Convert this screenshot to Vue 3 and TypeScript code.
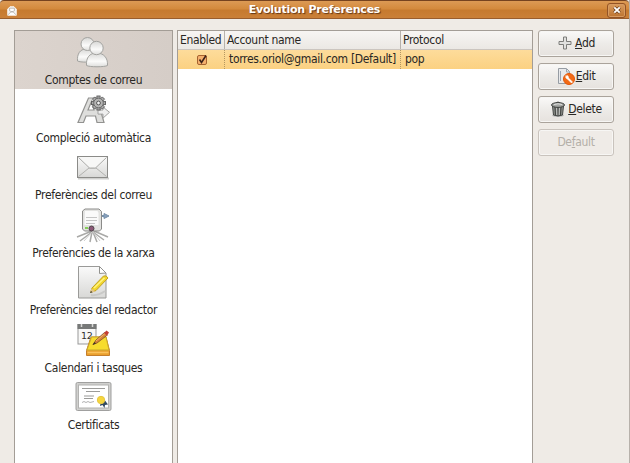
<script setup lang="ts">
import { ref } from 'vue'

interface Category {
  icon: string
  label: string
}

const categories: Category[] = [
  { icon: 'accounts', label: 'Comptes de correu' },
  { icon: 'completion', label: 'Compleció automàtica' },
  { icon: 'mail', label: 'Preferències del correu' },
  { icon: 'network', label: 'Preferències de la xarxa' },
  { icon: 'composer', label: 'Preferències del redactor' },
  { icon: 'calendar', label: 'Calendari i tasques' },
  { icon: 'certificate', label: 'Certificats' },
]
const selected = ref(0)
const spokes = [0, 45, 90, 135, 180, 225, 270, 315]
</script>

<template>
  <div class="window">
    <header class="titlebar">
      <svg class="app-icon" viewBox="0 0 10 10">
        <path d="M.7 9.3V3.2L3 .7h4l2.3 2.500v6.100z" fill="#f4f3f1" stroke="#fff" stroke-width=".8" />
        <path d="M2.600 2.200h4.800v2.600L5 6 2.600 4.800zM1 8.800l3-3h2l3 3" fill="#fff" stroke="#a7a29c" stroke-width=".7" />
      </svg>
      <h1>Evolution Preferences</h1>
      <button class="close" aria-label="Close">
        <svg viewBox="0 0 8 8"><path d="M1.300 1.300l5.400 5.400M6.700 1.300L1.300 6.700" stroke="#613616" stroke-width="3.200" /><path d="M1.300 1.300l5.400 5.400M6.700 1.300L1.300 6.700" stroke="#fff" stroke-width="1.900" /></svg>
      </button>
    </header>
    <main class="content">
      <nav class="sidebar">
        <div v-for="(c, i) in categories" :key="c.icon" class="item" :class="{ selected: i === selected }" @click="selected = i">
          <svg class="cat-icon" viewBox="0 0 34 34">
            <defs>
              <linearGradient id="silver" x1="0" y1="0" x2="0" y2="1"><stop offset="0" stop-color="#fafafa" /><stop offset="1" stop-color="#d8d8d6" /></linearGradient>
              <linearGradient id="body" x1="0" y1="0" x2="0" y2="1"><stop offset="0" stop-color="#d8d8d6" /><stop offset=".6" stop-color="#fbfbfa" /><stop offset="1" stop-color="#dededc" /></linearGradient>
            </defs>
            <g v-if="c.icon === 'accounts'" fill="url(#body)" stroke="#a3a3a0">
              <path d="M1.500 26c-.5-7 2.500-12 8.500-12s8 4 8 12c-3 1.500-13.500 1.500-16.500 0z" />
              <circle cx="11.500" cy="9" r="6.500" />
              <path d="M10.500 30.500c-.5-8 3-12.500 10-12.500s11.500 4.500 11 12.500c-3 1.700-18 1.700-21 0z" />
              <circle cx="20.500" cy="13" r="6.700" />
            </g>
            <g v-else-if="c.icon === 'completion'" transform="translate(0 -2)">
              <path d="M2 31.500h5.500l2.500-6.500h9.500l1.500 6.500H28L21 7h-8.500zM12 19l3.500-8.500 2.500 8.500z" fill="#dededc" stroke="#929290" stroke-width="1.200" fill-rule="evenodd" />
              <path d="M22 19h5v-3l6.500 5.300-6.500 5.800v-4h-5z" fill="#eee" stroke="#a1a1a0" />
              <g transform="translate(22.500 12)">
                <g v-for="s in spokes" :key="s" :transform="`rotate(${s})`"><rect x="-1.600" y="-7" width="3.200" height="5" fill="#aaa" stroke="#5d5d5d" stroke-width=".9" /></g>
                <circle r="4.800" fill="#b5b5b4" stroke="#6c6c6c" /><circle r="1.900" fill="#f2f2f2" stroke="#555" />
              </g>
            </g>
            <g v-else-if="c.icon === 'mail'">
              <path d="M2 28.500h31" stroke="#cfcfcd" stroke-width="2" />
              <rect x="1.500" y="6.500" width="30" height="21" fill="url(#silver)" stroke="#8b8b88" />
              <path d="M2.500 26.500L13 18h7l10.500 8.500" fill="none" stroke="#b2b2af" />
              <path d="M2.500 7.500L13 17.500q.5.500 1.500.5h4q1 0 1.500-.5L30.500 7.500" fill="#f7f7f6" stroke="#a2a29f" stroke-width=".9" />
            </g>
            <g v-else-if="c.icon === 'network'">
              <path d="M16 23L1 29M16 24L4 33M16 24l-2 10M17 24l4 10M17 24l11 8M18 23l14 6" stroke="#a9a9a7" stroke-width="1.500" />
              <path d="M16 24L8 33M17 24l7 9" stroke="#cececd" />
              <path d="M25 7.500h3v-2l5 2.500-5 2.500V8.500h-3" fill="#88a1bd" stroke="#7790aa" />
              <path d="M9 1h14l2.500 2.500V21l-2 2H8.500l-2-2V3z" fill="#e2e2e0" stroke="#8b8b89" />
              <path d="M9 3h12.500l1 2v12H8.500z" fill="#fafafa" />
              <path d="M10 9.500h11M10 12.500h11M10 15.500h9" stroke="#c5c5c5" />
              <path d="M9 20h3" stroke="#65c82d" stroke-width="1.500" />
              <circle cx="15.500" cy="20.500" r="2.500" fill="#8c5877" stroke="#4f444b" />
            </g>
            <g v-else-if="c.icon === 'composer'">
              <path d="M2.500 1.500h21l6.500 6.500v25H2.500z" fill="url(#silver)" stroke="#9a9a98" />
              <path d="M23.500 1.500L30 8l-6.500.5z" fill="#fff" stroke="#92928f" />
              <path d="M15 30q7 1 14-4" stroke="#c9c9c7" stroke-width="2" fill="none" />
              <path d="M14.500 27.500l1.500-4.500L27.500 11q3-1 4.500 2L20 25.500z" fill="#f2d62e" stroke="#c0a225" />
              <path d="M18 23l10.500-10" stroke="#fff482" stroke-width="1.400" /><path d="M14 28l1.500-4.500 4 3z" fill="#e1c487" /><path d="M14 28l1-2 1.500 1.200z" fill="#333" />
            </g>
            <g v-else-if="c.icon === 'calendar'">
              <rect x="2" y="1.500" width="18" height="19.500" fill="#f8f8f7" stroke="#999" /><path d="M1.500 1h19v5h-19z" fill="#777978" /><path d="M5.500 1v3M16.500 1v3" stroke="#d9d9d7" stroke-width="1.500" />
              <text x="5" y="16" class="day">12</text>
              <path d="M15 14h15l3.500 13.500v5H10.500v-5z" fill="#eaa02e" stroke="#c47e2c" />
              <path d="M15.500 14H30l3 13H11z" fill="#f7dc2d" stroke="#c9a92c" /><path d="M11.500 29.500h21" stroke="#fac25d" stroke-width="1.500" />
              <path d="M17 21.500l3-4.500L28.500 9.500l3 2.500L21 20z" fill="#d68338" stroke="#82502c" stroke-width=".8" /><path d="M20 18l9-7.500" stroke="#f4b369" /><path d="M28 10l2.500-2.500 2.500 2-2 3z" fill="#c33e36" /><path d="M16.500 22l2-3 1.500 1.500z" fill="#403623" />
            </g>
            <g v-else>
              <rect x="0" y="2.500" width="35" height="28" rx="1.500" fill="#d0d0ce" stroke="#a0a09f" />
              <rect x="2.500" y="5" width="30" height="23" fill="#fff" stroke="#b2b2b0" />
              <path d="M6 8.500h23M10 11.500h14M8 16h10M8 18.500h9" stroke="#9b9b99" stroke-width="1.100" /><path d="M6 22.500l2-1 2 1 2-1 2 1 4-1" fill="none" stroke="#b2b2b2" />
              <path d="M25 21l-1 5 2.500-1 2 3 .5-3 3-.5-3-4z" fill="#304860" /><circle cx="25" cy="20" r="3.700" fill="#f6d63e" stroke="#e6c843" />
            </g>
          </svg>
          <span>{{ c.label }}</span>
        </div>
      </nav>

      <section class="accounts">
        <div class="row head"><span>Enabled</span><span>Account name</span><span>Protocol</span></div>
        <div class="row account">
          <span class="check-cell">
            <svg class="check" viewBox="0 0 12 12"><rect x="1.500" y="1.500" width="9" height="9" rx="1.500" fill="#f4b06d" stroke="#a6622f" /><path d="M3.500 5.500l2 3 4.500-7" fill="none" stroke="#3c2118" stroke-width="1.600" /></svg>
          </span>
          <span class="address">torres.oriol@gmail.com [Default]</span><span>pop</span>
        </div>
      </section>

      <aside class="actions">
        <button class="action add">
          <svg viewBox="0 0 16 16"><path d="M6.500 2h3v4.500H14v3H9.500V14h-3V9.500H2v-3h4.500z" fill="#e1e1df" stroke="#7d7d7a" /></svg>
          <span><u>A</u>dd</span>
        </button>
        <button class="action edit">
          <svg viewBox="0 0 18 18"><path d="M1.500 1.500h8l3 3v12h-11z" fill="#e8e9eb" stroke="#969ca3" /><path d="M3.500 4v10M9.500 2v3h3" stroke="#9ba6b2" fill="none" /><circle cx="12" cy="12" r="5.500" fill="#f26a16" stroke="#e35708" /><path d="M9 8.500q-1 3 1.500 3.500l4 4 1-1-4-4q.3-2-1.500-2.500v2z" fill="#fff" stroke="#fff" stroke-width=".6" /></svg>
          <span><u>E</u>dit</span>
        </button>
        <button class="action delete">
          <svg viewBox="0 0 16 16"><ellipse cx="8" cy="14.500" rx="6" ry="1.500" fill="#bbb" /><path d="M2.500 5l1 9q4.500 2 9 0l1-9z" fill="#929491" stroke="#444643" /><path d="M5 6l.5 8M8 6.500v8M11 6l-.5 8" stroke="#454744" stroke-width="1.200" /><path d="M6.500 6l.3 8M9.500 6l-.3 8" stroke="#d4d5d2" stroke-width=".7" /><path d="M5.500 2q2.500-2 5 0" fill="none" stroke="#555" /><ellipse cx="8" cy="4" rx="6.500" ry="2.400" fill="#a3a5a2" stroke="#3c3e3b" /><path d="M4 3.500q4-1.500 8 0" stroke="#e0e0df" fill="none" /></svg>
          <span><u>D</u>elete</span>
        </button>
        <button class="action" disabled><span>De<u>f</u>ault</span></button>
      </aside>
    </main>
  </div>
</template>

<style>
body { background: #efebe6; overflow: hidden; }
</style>

<style scoped>
* { box-sizing: border-box; }
.window { width: 630px; height: 463px; overflow: hidden; display: flex; flex-direction: column; background: #efebe6; color: #292724; font: 12px/16px "DejaVu Sans Condensed", "DejaVu Sans", sans-serif; font-stretch: condensed; letter-spacing: -.32px; border-right: 1px solid #b7b1ab; }
.titlebar { flex: none; height: 19px; display: flex; align-items: center; justify-content: space-between; padding: 1px 3px 0 7px; background: linear-gradient(#dc9a55 0, #d48a3d 45%, #c67a2f 55%, #ca8038 100%); border-top: 1px solid #76431f; border-bottom: 1px solid #995d2d; border-radius: 4px 4px 0 0; }
.app-icon { width: 10px; height: 10px; margin-top: 2px; }
h1 { margin: -1px 0 0 5px; color: #fff; font: bold 11px/16px "DejaVu Sans", sans-serif; font-stretch: normal; letter-spacing: -.25px; text-shadow: 1px 1px 1px #633616; }
.close { width: 19px; height: 15px; padding: 0; display: grid; place-items: center; border: 1px solid #935325; border-radius: 3px; background: linear-gradient(#d99b5d, #bd7431); box-shadow: inset 0 0 0 1px #d89b60; }
.close svg { width: 8px; height: 8px; }
.content { flex: 1; display: flex; padding: 11px 15px 0 14px; min-height: 0; }
.sidebar { width: 159px; flex: none; background: #fff; border: 1px solid #a39d96; border-bottom: 0; }
.item { height: 57.500px; display: flex; flex-direction: column; align-items: center; padding-top: 4px; white-space: nowrap; }
.item.selected { background: linear-gradient(90deg, #dcd4ce, #d5cdc7); }
.cat-icon { width: 34px; height: 34px; flex: none; margin-right: 1.500px; overflow: visible; }
.item span { margin-top: 3px; }
.day { font: 9.500px "DejaVu Sans", sans-serif; fill: #333; }
.accounts { width: 356px; margin-left: 4px; flex: none; border: 1px solid #a39d96; border-bottom: 0; background: #fff; }
.row { display: grid; grid-template-columns: 46px 176px 1fr; height: 19px; align-items: stretch; line-height: 18px; white-space: nowrap; }
.row > span { padding-left: 2px; }
.head { background: linear-gradient(#f7f5f3, #ebe8e4); border-bottom: 1px solid #cbc5bf; }
.head > span + span { border-left: 1px solid #b7b2ac; }
.account { background: linear-gradient(#fddc9b, #fbd182); }
.account > span + span { border-left: 1px dotted #b39661; padding-left: 4px; }
.row > .check-cell { padding: 4px 0 0 18px; }
.check { display: block; width: 12px; height: 12px; }
.actions { width: 76px; margin-left: 5px; display: flex; flex-direction: column; gap: 6px; }
.action { height: 27px; flex: none; display: flex; align-items: center; justify-content: center; gap: 2px; padding: 0 0 1px; color: #292724; font: inherit; letter-spacing: inherit; border: 1px solid #aaa39b; border-radius: 3px; background: linear-gradient(#faf9f8, #edebe8 50%, #e6e2de); box-shadow: inset 0 0 0 1px #f7f6f4; }
.action svg { width: 16px; height: 16px; flex: none; }
.action.edit { gap: 1px; }
.action.edit svg { width: 18px; height: 18px; }
.action:disabled { color: #b4afa8; background: #efebe7; border-color: #c9c3bd; }
u { text-underline-offset: 1px; text-decoration-thickness: 1px; }
</style>
